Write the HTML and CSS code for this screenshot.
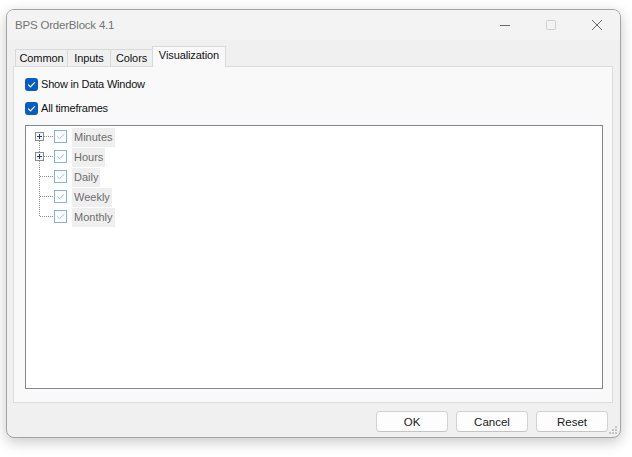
FILE: index.html
```html
<!DOCTYPE html>
<html>
<head>
<meta charset="utf-8">
<link rel="stylesheet" href="styles.css">
</head>
<body>
<div class="window">
  <div class="titlebar">
    <span class="title">BPS OrderBlock 4.1</span>
    <div class="caption">
      <span class="cbtn"><svg width="12" height="12" viewBox="0 0 12 12"><path d="M1 6.5h10" stroke="#6a6a6a" stroke-width="1"/></svg></span>
      <span class="cbtn"><svg width="12" height="12" viewBox="0 0 12 12"><rect x="1.5" y="1.5" width="9" height="9" rx="1" fill="none" stroke="#cfcfcf"/></svg></span>
      <span class="cbtn"><svg width="12" height="12" viewBox="0 0 12 12"><path d="M1 1L11 11M11 1L1 11" stroke="#6a6a6a" stroke-width="1"/></svg></span>
    </div>
  </div>
  <div class="body">
    <div class="tabs">
      <div class="tab t-common">Common</div>
      <div class="tab t-inputs">Inputs</div>
      <div class="tab t-colors">Colors</div>
      <div class="tab t-vis active">Visualization</div>
    </div>
    <div class="panel">
      <label class="check-row">
        <span class="cb"><svg width="13" height="13" viewBox="0 0 13 13"><rect x="0" y="0" width="13" height="13" rx="3" fill="#0b5cbf"/><path d="M3.2 6.7L5.4 8.9L9.8 4.4" fill="none" stroke="#fff" stroke-width="1.2"/></svg></span>
        <span>Show in Data Window</span>
      </label>
      <label class="check-row">
        <span class="cb"><svg width="13" height="13" viewBox="0 0 13 13"><rect x="0" y="0" width="13" height="13" rx="3" fill="#0b5cbf"/><path d="M3.2 6.7L5.4 8.9L9.8 4.4" fill="none" stroke="#fff" stroke-width="1.2"/></svg></span>
        <span>All timeframes</span>
      </label>
      <div class="tree">
        <div class="node">
          <svg class="lines" width="46" height="20" viewBox="0 0 46 20">
            <path d="M13.5 14V20" stroke="#8a8a8a" stroke-dasharray="1 1"/>
            <path d="M18 9.5H28" stroke="#8a8a8a" stroke-dasharray="1 1"/>
            <rect x="9.5" y="5.5" width="8" height="8" fill="#f4f4f4" stroke="#8c8c8c"/>
            <path d="M11 9.5H16M13.5 7V12" stroke="#1f3f7a"/>
            <rect x="28.5" y="3.5" width="12" height="12" fill="#fff" stroke="#84b2e0"/>
            <path d="M31.3 9.6L33.6 11.8L37.8 7.3" fill="none" stroke="#8fbbe6" stroke-width="1"/>
          </svg>
          <span class="label">Minutes</span>
        </div>
        <div class="node">
          <svg class="lines" width="46" height="20" viewBox="0 0 46 20">
            <path d="M13.5 0V5M13.5 14V20" stroke="#8a8a8a" stroke-dasharray="1 1"/>
            <path d="M18 9.5H28" stroke="#8a8a8a" stroke-dasharray="1 1"/>
            <rect x="9.5" y="5.5" width="8" height="8" fill="#f4f4f4" stroke="#8c8c8c"/>
            <path d="M11 9.5H16M13.5 7V12" stroke="#1f3f7a"/>
            <rect x="28.5" y="3.5" width="12" height="12" fill="#fff" stroke="#84b2e0"/>
            <path d="M31.3 9.6L33.6 11.8L37.8 7.3" fill="none" stroke="#8fbbe6" stroke-width="1"/>
          </svg>
          <span class="label">Hours</span>
        </div>
        <div class="node">
          <svg class="lines" width="46" height="20" viewBox="0 0 46 20">
            <path d="M13.5 0V20" stroke="#8a8a8a" stroke-dasharray="1 1"/>
            <path d="M14 9.5H28" stroke="#8a8a8a" stroke-dasharray="1 1"/>
            <rect x="28.5" y="3.5" width="12" height="12" fill="#fff" stroke="#84b2e0"/>
            <path d="M31.3 9.6L33.6 11.8L37.8 7.3" fill="none" stroke="#8fbbe6" stroke-width="1"/>
          </svg>
          <span class="label">Daily</span>
        </div>
        <div class="node">
          <svg class="lines" width="46" height="20" viewBox="0 0 46 20">
            <path d="M13.5 0V20" stroke="#8a8a8a" stroke-dasharray="1 1"/>
            <path d="M14 9.5H28" stroke="#8a8a8a" stroke-dasharray="1 1"/>
            <rect x="28.5" y="3.5" width="12" height="12" fill="#fff" stroke="#84b2e0"/>
            <path d="M31.3 9.6L33.6 11.8L37.8 7.3" fill="none" stroke="#8fbbe6" stroke-width="1"/>
          </svg>
          <span class="label">Weekly</span>
        </div>
        <div class="node">
          <svg class="lines" width="46" height="20" viewBox="0 0 46 20">
            <path d="M13.5 0V10" stroke="#8a8a8a" stroke-dasharray="1 1"/>
            <path d="M14 9.5H28" stroke="#8a8a8a" stroke-dasharray="1 1"/>
            <rect x="28.5" y="3.5" width="12" height="12" fill="#fff" stroke="#84b2e0"/>
            <path d="M31.3 9.6L33.6 11.8L37.8 7.3" fill="none" stroke="#8fbbe6" stroke-width="1"/>
          </svg>
          <span class="label">Monthly</span>
        </div>
      </div>
    </div>
    <div class="buttons">
      <button class="btn">OK</button>
      <button class="btn">Cancel</button>
      <button class="btn">Reset</button>
    </div>
  </div>
  <svg class="grip" width="8" height="8" viewBox="0 0 8 8">
    <rect x="6" y="0" width="2" height="2" fill="#c4c4c4"/>
    <rect x="3" y="3" width="2" height="2" fill="#c4c4c4"/>
    <rect x="6" y="3" width="2" height="2" fill="#c4c4c4"/>
    <rect x="0" y="6" width="2" height="2" fill="#c4c4c4"/>
    <rect x="3" y="6" width="2" height="2" fill="#c4c4c4"/>
    <rect x="6" y="6" width="2" height="2" fill="#c4c4c4"/>
  </svg>
</div>
</body>
</html>
```
FILE: styles.css
```css
html, body {
  margin: 0;
  padding: 0;
  background: #ffffff;
}
body {
  font-family: "Liberation Sans", Arial, sans-serif;
  font-size: 11px;
  color: #1a1a1a;
  width: 632px;
  height: 457px;
  overflow: hidden;
}
.window {
  position: relative;
  margin: 9px 0 0 6px;
  width: 615px;
  height: 429px;
  box-sizing: border-box;
  border: 1px solid #a3a3a3;
  border-radius: 8px;
  background: #f0f0f0;
  box-shadow: 0 4px 14px rgba(0, 0, 0, 0.22);
  overflow: hidden;
  display: flex;
  flex-direction: column;
}
.titlebar {
  height: 30px;
  flex: none;
  display: flex;
  align-items: center;
  background: #f3f3f3;
  padding-left: 8px;
}
.title {
  color: #737373;
  font-size: 11.5px;
  letter-spacing: -0.2px;
  margin-top: -1px;
}
.caption {
  margin-left: auto;
  display: flex;
  height: 30px;
}
.cbtn {
  width: 46px;
  height: 30px;
  display: flex;
  align-items: center;
  justify-content: center;
}
.body {
  flex: 1;
  display: flex;
  flex-direction: column;
  padding: 6px 0 0 6px;
}
.tabs {
  display: flex;
  align-items: flex-end;
  height: 20px;
  margin-left: 2px;
  position: relative;
  z-index: 1;
}
.tab {
  box-sizing: border-box;
  height: 17px;
  border: 1px solid #d9d9d9;
  border-bottom: none;
  background: #f0f0f0;
  text-align: center;
  line-height: 17px;
  color: #111;
  margin-left: -1px;
  letter-spacing: -0.1px;
}
.t-common { width: 53px; margin-left: 0; }
.t-inputs { width: 44px; }
.t-colors { width: 43px; }
.t-vis { width: 74px; }
.tab.active {
  height: 21px;
  margin-bottom: -1px;
  background: #f9f9f9;
  line-height: 17px;
}
.panel {
  box-sizing: border-box;
  width: 600px;
  height: 337px;
  border: 1px solid #dcdcdc;
  background: #f9f9f9;
  padding: 5px 0 0 11px;
}
.check-row {
  display: flex;
  align-items: center;
  height: 24px;
  color: #111;
  letter-spacing: -0.2px;
}
.cb {
  width: 13px;
  height: 13px;
  display: block;
  margin-right: 3px;
}
.cb svg { display: block; }
.tree {
  box-sizing: border-box;
  margin-top: 5px;
  width: 578px;
  height: 264px;
  border: 1px solid #828790;
  background: #ffffff;
  padding-top: 1px;
}
.node {
  display: flex;
  align-items: center;
  height: 20px;
}
.lines {
  display: block;
  flex: none;
}
.label {
  display: block;
  height: 19px;
  line-height: 19px;
  background: #efefef;
  color: #6d6d6d;
  padding: 0 2px 0 2px;
}
.buttons {
  display: flex;
  justify-content: flex-end;
  gap: 8px;
  margin-top: 8px;
  padding-right: 12px;
}
.btn {
  box-sizing: border-box;
  width: 72px;
  height: 21px;
  border: 1px solid #d2d2d2;
  border-bottom-color: #c4c4c4;
  border-radius: 4px;
  background: #fdfdfd;
  font-family: "Liberation Sans", Arial, sans-serif;
  font-size: 11.5px;
  color: #1a1a1a;
  padding: 0;
}
.grip {
  position: absolute;
  right: 3px;
  bottom: 3px;
  display: block;
}
```
